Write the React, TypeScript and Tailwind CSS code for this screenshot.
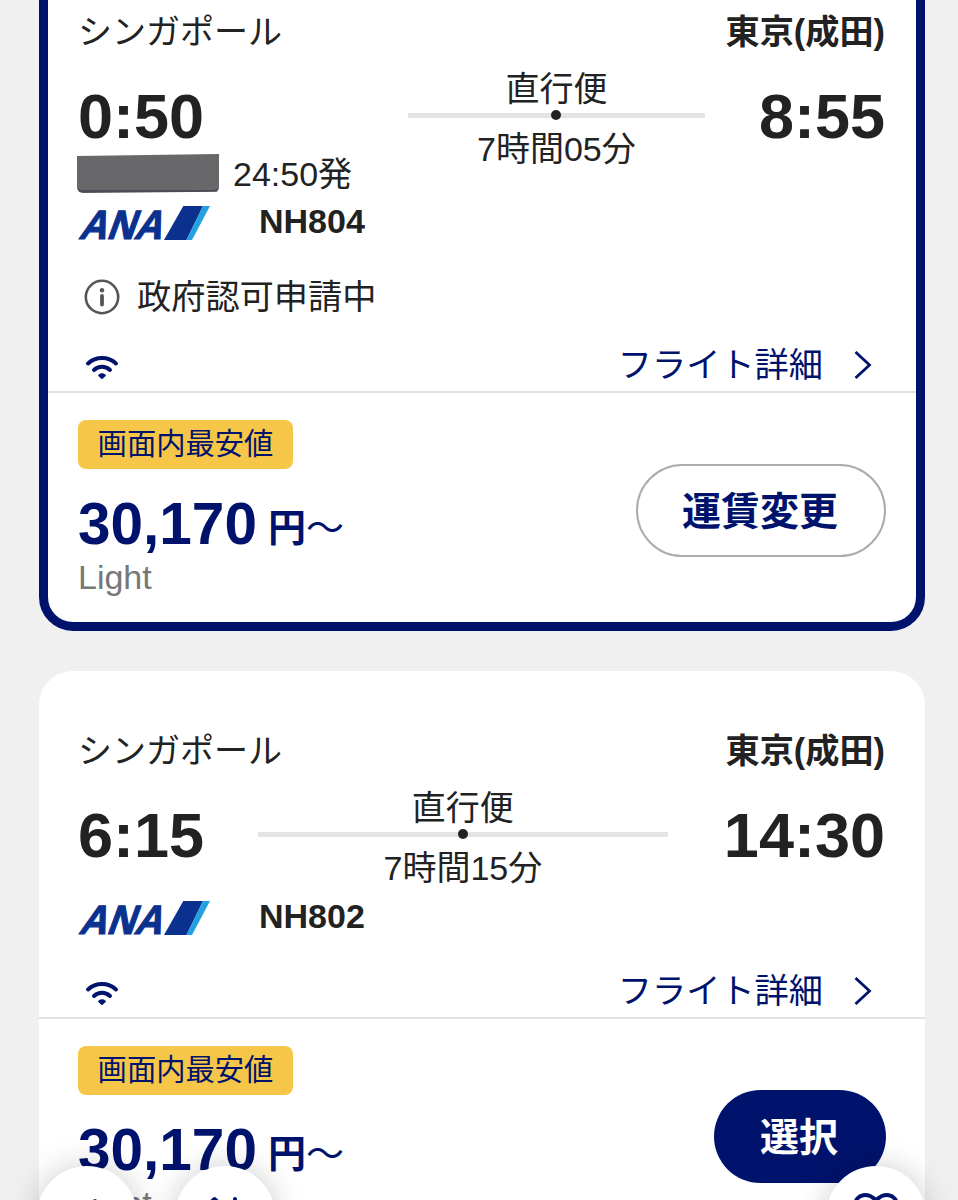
import type { ReactNode } from 'react'
import clsx from 'clsx'

type Flight = {
  from: string
  to: string
  departure: string
  arrival: string
  duration: string
  number: string
  price: string
  fare: string
  departureNote?: string
  notice?: string
  selected?: boolean
}

const flights: Flight[] = [
  {
    from: 'シンガポール',
    to: '東京(成田)',
    departure: '0:50',
    arrival: '8:55',
    duration: '7時間05分',
    number: 'NH804',
    price: '30,170',
    fare: 'Light',
    departureNote: '24:50発',
    notice: '政府認可申請中',
    selected: true,
  },
  {
    from: 'シンガポール',
    to: '東京(成田)',
    departure: '6:15',
    arrival: '14:30',
    duration: '7時間15分',
    number: 'NH802',
    price: '30,170',
    fare: 'Light',
  },
]

function AnaLogo() {
  return (
    <svg width="132" height="34" viewBox="0 0 132 34" className="shrink-0 overflow-visible" aria-label="ANA">
      <text
        transform="translate(0 33.4) skewX(-20)"
        x="0"
        y="0"
        textLength="83"
        lengthAdjust="spacingAndGlyphs"
        fontFamily="Liberation Sans, sans-serif"
        fontWeight="700"
        fontSize="41"
        fill="#0b318f"
        stroke="#0b318f"
        strokeWidth="1.2"
      >
        ANA
      </text>
      <path d="M105.300 0H125L108.500 34H86Z" fill="#0b318f" />
      <path d="M125 0H132L114 34H108.500Z" fill="#22a0e0" />
    </svg>
  )
}

function WifiIcon() {
  return (
    <svg width="34" height="26" viewBox="0 0 34 26" fill="none" stroke="#00136c" className="ml-[7px] mt-[3px]">
      <path d="M3 9.5C11 2.200 23 2.200 31 9.5" strokeWidth="4" strokeLinecap="round" />
      <path d="M9 16C13.500 11.800 20.500 11.800 25 16" strokeWidth="4" strokeLinecap="round" />
      <path d="M14 21.400C15.700 20.100 18.300 20.100 20 21.400L17 24.200Z" fill="#00136c" strokeWidth="1.800" strokeLinejoin="round" />
    </svg>
  )
}

function InfoIcon() {
  return (
    <svg width="36" height="36" viewBox="0 0 36 36" fill="none" className="ml-[6px] mr-[17px]">
      <circle cx="18" cy="18" r="16.200" stroke="#555" strokeWidth="2.600" />
      <circle cx="18" cy="11.200" r="2.200" fill="#555" />
      <path d="M18 17V25.500" stroke="#555" strokeWidth="3.800" strokeLinecap="round" />
    </svg>
  )
}

function Route({ duration, wide }: { duration: string; wide: boolean }) {
  return (
    <div
      className={clsx(
        'flex flex-col items-center text-[34px] leading-[40px]',
        wide ? 'w-[410px] mr-[56px]' : 'w-[297px] mr-[54px]',
      )}
    >
      <span className="mb-[4px] -mt-px">直行便</span>
      <div className="flex h-[5px] w-full items-center justify-center bg-[#e4e4e4]">
        <span className="h-[10px] w-[10px] shrink-0 rounded-full bg-[#222]" />
      </div>
      <span className="mt-[11px] -mb-[8px]">{duration}</span>
    </div>
  )
}

function FlightCard({ flight }: { flight: Flight }) {
  const selected = !!flight.selected
  const px = selected ? 'px-[30px]' : 'px-[39px]'

  return (
    <section
      className={clsx(
        'rounded-[34px] bg-white',
        selected ? 'border-[9px] border-[#00136c] pt-[49px]' : 'pt-[58px]',
      )}
    >
      <div className={px}>
        <div className="flex h-[44px] items-center justify-between text-[34px]">
          <span>{flight.from}</span>
          <span className="mr-px text-[34.2px] font-bold">{flight.to}</span>
        </div>

        <div className="mt-[22px] flex h-[78px] items-center">
          <span className="mr-auto mt-[2px] text-[63px] font-bold">{flight.departure}</span>
          <Route duration={flight.duration} wide={!selected} />
          <span className="mr-px mt-[2px] text-[63px] font-bold">{flight.arrival}</span>
        </div>

        {flight.departureNote && (
          <div className="-mb-[16px] flex h-[40px] items-center gap-[14px] text-[34px]">
            <span className="-ml-px mb-px h-[39px] w-[142px] rounded-b-[6px] border-b-[3px] border-[#4c4c56] bg-[#68686a] [clip-path:polygon(0_5%,100%_0,100%_97%,0_100%)]" />
            <span>{flight.departureNote}</span>
          </div>
        )}

        <div className="mt-[28px] flex h-[34px] items-center">
          <AnaLogo />
          <span className="-mt-[4px] ml-[49px] text-[34px] font-bold">{flight.number}</span>
        </div>

        {flight.notice && (
          <div className="-mb-[8px] mt-[37px] flex h-[40px] items-center text-[34.200px]">
            <InfoIcon />
            <span>{flight.notice}</span>
          </div>
        )}

        <div className="mt-[34px] flex h-[44px] items-center justify-between text-[#00136c]">
          <WifiIcon />
          <a className="flex items-center text-[34.200px]">
            フライト詳細
            <svg width="18" height="28" viewBox="0 0 18 28" fill="none" className="ml-[31px] mr-[14px] mt-px">
              <path d="M1.500 1L15.500 14L1.500 27" stroke="#00136c" strokeWidth="2.800" />
            </svg>
          </a>
        </div>
      </div>

      <div className={clsx('mt-[4px] flex h-[231px] items-start justify-between border-t-2 border-[#e2e2e2]', px)}>
        <div className="pt-[27px]">
          <div className="flex h-[49px] w-[215px] items-center justify-center rounded-[8px] bg-[#f5c647] pb-px text-[29.300px] text-[#00136c]">
            画面内最安値
          </div>
          <div className="mt-[25px] flex h-[60px] items-baseline leading-[60px] text-[#00136c]">
            <span className="text-[58.500px] font-bold">{flight.price}</span>
            <span className="relative -top-[3px] ml-[11px] text-[38px] font-bold">円</span>
            <span className="relative -top-[3px] text-[38px]">〜</span>
          </div>
          <div className="mt-[3px] text-[34px] leading-[40px] text-[#777]">{flight.fare}</div>
        </div>

        {selected ? (
          <button className="mt-[71px] h-[93px] w-[250px] rounded-full border-2 border-[#acacac] pr-[2px] pt-[2px] text-[39px] font-bold text-[#00136c]">
            運賃変更
          </button>
        ) : (
          <button className="mt-[71px] h-[93px] w-[172px] rounded-full bg-[#00136c] pr-[2px] pt-[2px] text-[39px] font-bold text-white">
            選択
          </button>
        )}
      </div>
    </section>
  )
}

function RoundButton({ className, children }: { className?: string; children: ReactNode }) {
  return (
    <button
      className={clsx(
        'flex h-[100px] w-[100px] justify-center rounded-full bg-white shadow-[0_0_32px_rgba(0,0,0,0.2)]',
        className,
      )}
    >
      {children}
    </button>
  )
}

export default function App() {
  return (
    <div className="relative h-screen overflow-hidden bg-[#f0f0f0] font-['Liberation_Sans','Noto_Sans_CJK_JP',sans-serif] leading-none text-[#222]">
      <main className="-mt-[48px] ml-[39px] mr-[33px] flex flex-col gap-[40px]">
        {flights.map((flight) => (
          <FlightCard key={flight.number} flight={flight} />
        ))}
      </main>

      {/* floating browser controls, cut off by the bottom edge */}
      <nav className="absolute left-[37px] right-[32px] top-[1166px] flex">
        <RoundButton>
          <svg width="50" height="50" viewBox="0 0 50 50" fill="none" stroke="#222" strokeWidth="4" strokeLinecap="round" className="mt-[30px]">
            <path d="M33 5L14 24L33 43" />
          </svg>
        </RoundButton>
        <RoundButton className="ml-[38px]">
          <svg width="50" height="50" viewBox="0 0 50 50" fill="none" stroke="#00136c" strokeWidth="4" strokeLinecap="round" strokeLinejoin="round" className="mt-[28px]">
            <path d="M5 14L14.500 5L24 14M14.500 5V42M35 5V42" />
          </svg>
        </RoundButton>
        <RoundButton className="ml-auto">
          <svg width="50" height="50" viewBox="0 0 50 50" fill="none" stroke="#00136c" strokeWidth="4" className="mt-[26px]">
            <path d="M25 9C19 0 4 1 4 14C4 26 15 34 25 42C35 34 46 26 46 14C46 1 31 0 25 9Z" />
          </svg>
        </RoundButton>
      </nav>
    </div>
  )
}
